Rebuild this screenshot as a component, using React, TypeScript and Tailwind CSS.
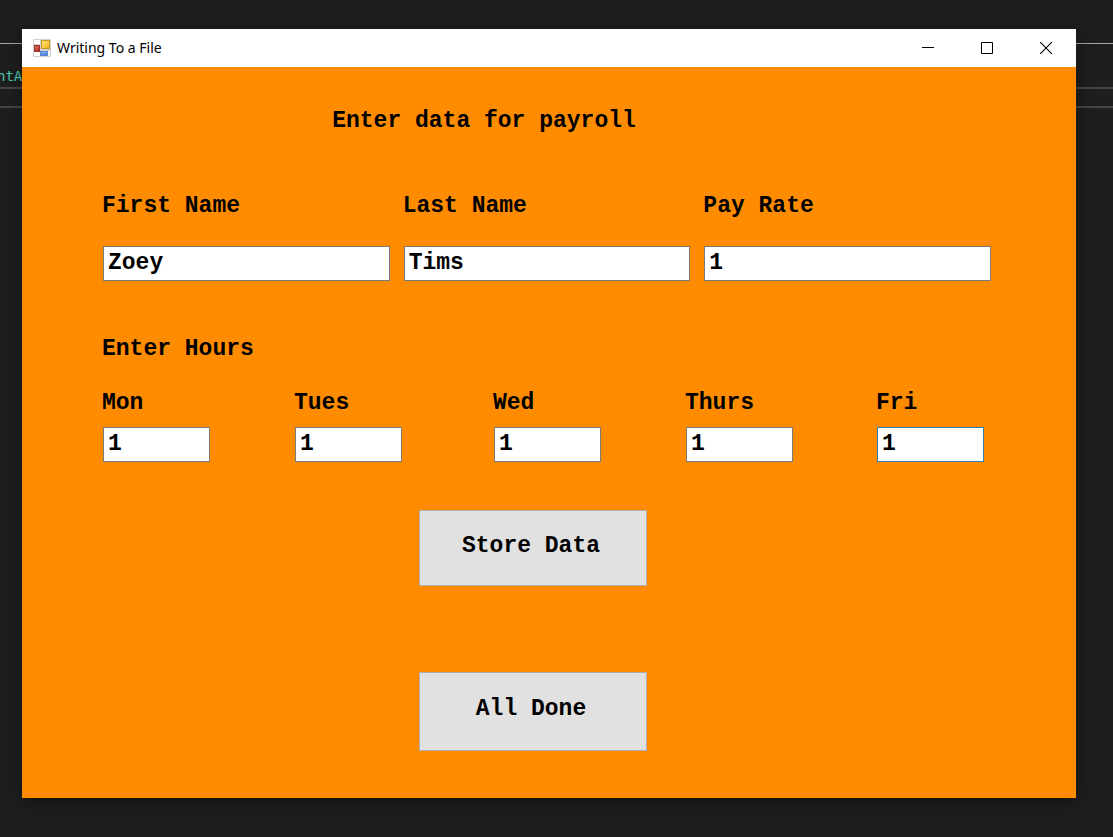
import { useState } from "react";

const personFields = [
  { id: "first-name", label: "First Name", initial: "Zoey" },
  { id: "last-name", label: "Last Name", initial: "Tims" },
  { id: "pay-rate", label: "Pay Rate", initial: "1" },
];

const dayFields = [
  { id: "mon", label: "Mon", initial: "1" },
  { id: "tues", label: "Tues", initial: "1" },
  { id: "wed", label: "Wed", initial: "1" },
  { id: "thurs", label: "Thurs", initial: "1" },
  { id: "fri", label: "Fri", initial: "1", active: true },
];

type FieldProps = {
  id: string;
  label: string;
  initial: string;
  active?: boolean;
  variant: "person" | "day";
};

function Field({ id, label, initial, active, variant }: FieldProps) {
  const [value, setValue] = useState(initial);
  const day = variant === "day";
  return (
    <div className={day ? "flex flex-col gap-[10px]" : "flex min-w-0 flex-col gap-[26px]"}>
      <label htmlFor={id} className="-ml-px leading-7">
        {label}
      </label>
      <input
        id={id}
        type="text"
        value={value}
        onChange={(e) => setValue(e.target.value)}
        className={`h-[35px] border bg-white px-1 pb-px leading-7 outline-none focus:border-[#0078d7] ${
          active ? "border-[#2f7fb8]" : "border-[#7a7a7a]"
        } ${day ? "w-[107px]" : "w-full"}`}
      />
    </div>
  );
}

/* Default form icon: a light frame holding red, yellow and blue tiles */
function FormIcon() {
  return (
    <svg width="18" height="18" viewBox="0 0 18 18" aria-hidden="true">
      <defs>
        <linearGradient id="tileYellow" x1="0" y1="0" x2="1" y2="1">
          <stop offset="0" stopColor="#ffe88a" />
          <stop offset="1" stopColor="#eeb010" />
        </linearGradient>
        <linearGradient id="tileRed" x1="0" y1="0" x2="1" y2="1">
          <stop offset="0" stopColor="#de8070" />
          <stop offset="1" stopColor="#a82018" />
        </linearGradient>
        <linearGradient id="tileBlue" x1="0" y1="0" x2="0" y2="1">
          <stop offset="0" stopColor="#90b8f4" />
          <stop offset="1" stopColor="#3c76d8" />
        </linearGradient>
      </defs>
      <rect width="18" height="18" rx="1" fill="#d2d2d0" />
      <rect x="1" y="1" width="6" height="4" fill="#fff" />
      <rect x="1" y="13" width="6" height="4" fill="#fff" />
      <rect x="15" y="12" width="2" height="5" fill="#f4f4f4" />
      <rect x="1.5" y="6.5" width="5" height="6" fill="url(#tileRed)" stroke="#a03028" />
      <rect x="8.5" y="1.5" width="8" height="8" fill="url(#tileYellow)" stroke="#c89a20" />
      <rect x="7.5" y="12.5" width="7" height="4" fill="url(#tileBlue)" stroke="#5a88d0" />
    </svg>
  );
}

function TitleBar() {
  const control = "flex h-full w-[59px] items-center justify-center hover:bg-[#e5e5e5]";
  return (
    <header className="flex h-[38px] shrink-0 items-center bg-white pr-px pl-[11px] text-black">
      <FormIcon />
      <h1 className="ml-[6px] flex-1 font-['Noto_Sans','Open_Sans',sans-serif] text-sm">
        Writing To a File
      </h1>
      <button type="button" aria-label="Minimize" className={control}>
        <svg width="12" height="12" viewBox="0 0 12 12" stroke="currentColor">
          <path d="M0 5.5H12" />
        </svg>
      </button>
      <button type="button" aria-label="Maximize" className={control}>
        <svg width="12" height="12" viewBox="0 0 12 12" fill="none" stroke="currentColor">
          <path d="M.5 .5H11.5V11.5H.5Z" />
        </svg>
      </button>
      <button type="button" aria-label="Close" className={control}>
        <svg width="12" height="12" viewBox="0 0 12 12" stroke="currentColor" strokeWidth="1.1">
          <path d="M0 0L12 12M12 0L0 12" />
        </svg>
      </button>
    </header>
  );
}

/* Dark code editor that sits behind the form window */
function EditorBackdrop() {
  return (
    <div className="absolute inset-0 overflow-hidden bg-[#1e1e1e] pt-[43px]">
      <div className="h-px bg-[#a6a6a6]" />
      <div className="flex h-[43px] items-center pt-5 font-['DejaVu_Sans_Mono',monospace] text-sm text-[#4ec9b0]">
        <span className="-ml-[3px]">ntA</span>
      </div>
      <div className="h-[21px] border-y-2 border-[#464646]" />
    </div>
  );
}

export default function App() {
  const action =
    "w-[228px] border border-[#adadad] bg-[#e1e1e1] pr-1 pb-1 hover:border-[#0078d7] hover:bg-[#e5f1fb]";
  return (
    <div className="relative flex min-h-screen flex-col pt-[29px] pr-[37px] pb-[39px] pl-[22px]">
      <EditorBackdrop />
      <main className="relative flex flex-1 flex-col bg-[#ff8c00] shadow-[0_4px_16px_2px_rgba(0,0,0,0.3)]">
        <TitleBar />
        <form
          onSubmit={(e) => e.preventDefault()}
          className="flex flex-col pt-10 pr-[85px] pb-10 pl-[81px] font-['Liberation_Mono','Courier_New',monospace] text-[23px] font-bold text-black"
        >
          <h2 className="pr-[126px] text-center leading-7">Enter data for payroll</h2>

          <div className="mt-[57px] grid grid-cols-3 gap-[14px]">
            {personFields.map((f) => (
              <Field key={f.id} {...f} variant="person" />
            ))}
          </div>

          <fieldset className="mt-[54px]">
            <legend className="-ml-px leading-7">Enter Hours</legend>
            <div className="mt-[26px] grid grid-cols-[192fr_199fr_192fr_191fr_114fr]">
              {dayFields.map((f) => (
                <Field key={f.id} {...f} variant="day" />
              ))}
            </div>
          </fieldset>

          <div className="mt-12 flex flex-col items-center gap-[86px] pr-7">
            <button type="submit" className={`${action} h-[76px]`}>
              Store Data
            </button>
            <button type="button" className={`${action} h-[79px]`}>
              All Done
            </button>
          </div>
        </form>
      </main>
    </div>
  );
}
